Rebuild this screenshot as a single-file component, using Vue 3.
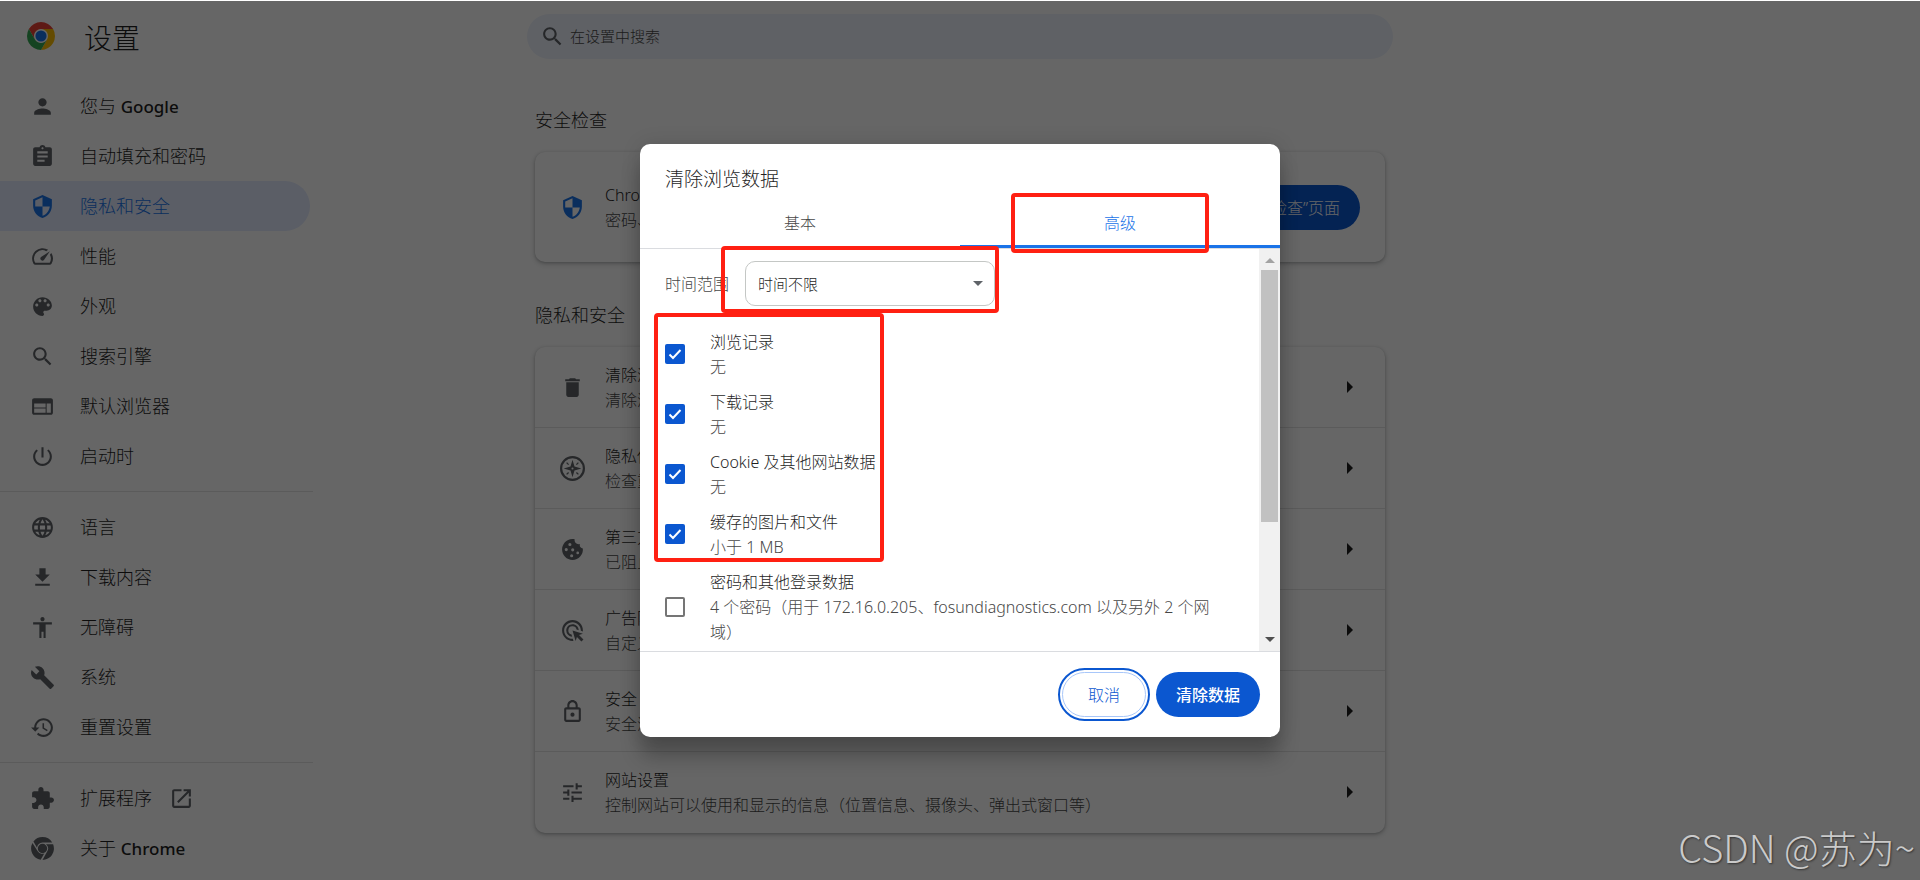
<template>
  <div class="page">
    <header class="toolbar">
      <div class="brand">
        <svg class="logo" viewBox="0 0 48 48" aria-hidden="true">
          <circle cx="24" cy="24" r="12" fill="#fff" />
          <path fill="#ea4335" d="M24 12h20.78A24 24 0 0 0 3.22 12L13.6 30A12 12 0 0 1 24 12z" />
          <path fill="#fbbc04" d="M34.39 30 24 48a24 24 0 0 0 20.78-36H24a12 12 0 0 1 10.39 18z" />
          <path fill="#34a853" d="M13.61 30 3.22 12A24 24 0 0 0 24 48l10.39-18a12 12 0 0 1-20.78 0z" />
          <circle cx="24" cy="24" r="9.5" fill="#1a73e8" />
        </svg>
        <h1>设置</h1>
      </div>
      <label class="search">
        <svg class="icon" viewBox="0 0 24 24" aria-hidden="true"><path :d="icons.search" /></svg>
        <input type="search" placeholder="在设置中搜索" aria-label="在设置中搜索" />
      </label>
    </header>

    <div class="columns">
      <nav class="sidebar">
        <ul v-for="(group, index) in menu" :key="index">
          <li v-for="item in group" :key="item.icon">
            <a href="#" :class="{ selected: item.selected }">
              <svg class="icon" viewBox="0 0 24 24" aria-hidden="true"><path :d="icons[item.icon]" /></svg>
              <span>{{ item.label }} <b v-if="item.brand">{{ item.brand }}</b></span>
              <svg v-if="item.external" class="icon external" viewBox="0 0 24 24" aria-hidden="true">
                <path :d="icons.open" />
              </svg>
            </a>
          </li>
        </ul>
      </nav>

      <main class="content">
        <h2>安全检查</h2>
        <section class="card check">
          <svg class="icon blue" viewBox="0 0 24 24" aria-hidden="true"><path :d="icons.shield" /></svg>
          <div class="text">
            <p>Chrome 可帮助您防范数据泄露、不良扩展程序等</p>
            <p class="sub">密码、扩展程序和其他设置</p>
          </div>
          <button class="filled" type="button">前往“安全检查”页面</button>
        </section>

        <h2>隐私和安全</h2>
        <section class="card">
          <a v-for="row in rows" :key="row.title" class="row" href="#">
            <svg class="icon" viewBox="0 0 24 24" aria-hidden="true">
              <path fill-rule="evenodd" :d="icons[row.icon]" />
            </svg>
            <span class="text">
              <span>{{ row.title }}</span>
              <span class="sub">{{ row.sub }}</span>
            </span>
            <svg class="arrow" viewBox="0 0 6 12" aria-hidden="true"><path d="M0 0l6 6-6 6z" /></svg>
          </a>
        </section>
      </main>
    </div>

    <div class="backdrop">
      <section class="dialog" role="dialog" aria-labelledby="dialog-title">
        <h2 id="dialog-title">清除浏览数据</h2>
        <div class="tabs" role="tablist">
          <button
            v-for="tab in tabs"
            :key="tab"
            type="button"
            role="tab"
            :aria-selected="tab === activeTab"
            :class="{ active: tab === activeTab }"
            @click="activeTab = tab"
          >
            {{ tab }}
          </button>
        </div>

        <div class="body">
          <div class="form">
            <div class="range">
              <label for="time-range">时间范围</label>
              <div class="picker">
                <select id="time-range" v-model="range">
                  <option v-for="option in ranges" :key="option">{{ option }}</option>
                </select>
                <svg viewBox="0 0 10 5" aria-hidden="true"><path d="M0 0h10L5 5z" /></svg>
              </div>
            </div>
            <label v-for="item in items" :key="item.title" class="item">
              <input v-model="item.checked" type="checkbox" />
              <span class="box">
                <svg v-if="item.checked" viewBox="0 0 20 20" aria-hidden="true">
                  <path d="M4.5 10.5L8 14l7.5-8" />
                </svg>
              </span>
              <span class="text">
                <span>{{ item.title }}</span>
                <span class="sub">{{ item.sub }}</span>
              </span>
            </label>
          </div>
          <div class="scrollbar" aria-hidden="true">
            <svg viewBox="0 0 10 5"><path d="M0 5h10L5 0z" fill="#a3a3a3" /></svg>
            <div class="track"><div class="thumb"></div></div>
            <svg viewBox="0 0 10 5"><path d="M0 0h10L5 5z" fill="#505050" /></svg>
          </div>
        </div>

        <footer>
          <button class="outlined" type="button">取消</button>
          <button class="filled" type="button">清除数据</button>
        </footer>

        <div class="mark mark-tab"></div>
        <div class="mark mark-range"></div>
        <div class="mark mark-items"></div>
      </section>
    </div>

    <div class="watermark">CSDN @苏为~</div>
  </div>
</template>

<script setup>
import {ref} from 'vue';

const icons = {
  person: 'M12 12c2.21 0 4-1.79 4-4s-1.79-4-4-4-4 1.79-4 4 1.79 4 4 4zm0 2c-2.67 0-8 1.34-8 4v2h16v-2c0-2.66-5.33-4-8-4z',
  assignment: 'M19 3h-4.18C14.4 1.84 13.3 1 12 1c-1.3 0-2.4.84-2.82 2H5c-1.1 0-2 .9-2 2v14c0 1.1.9 2 2 2h14c1.1 0 2-.9 2-2V5c0-1.1-.9-2-2-2zm-7 0c.55 0 1 .45 1 1s-.45 1-1 1-1-.45-1-1 .45-1 1-1zm2 14H7v-2h7v2zm3-4H7v-2h10v2zm0-4H7V7h10v2z',
  shield: 'M12 1L3 5v6c0 5.55 3.84 10.74 9 12 5.16-1.26 9-6.45 9-12V5l-9-4zm0 10.99h7c-.53 4.12-3.28 7.79-7 8.94V12H5V6.3l7-3.11v8.8z',
  speed: 'M20.38 8.57l-1.23 1.85a8 8 0 0 1-.22 7.58H5.07A8 8 0 0 1 15.58 6.85l1.85-1.23A10 10 0 0 0 3.35 19a2 2 0 0 0 1.72 1h13.85a2 2 0 0 0 1.74-1 10 10 0 0 0-.27-10.44zm-9.79 6.84a2 2 0 0 0 2.83 0l5.66-8.49-8.49 5.66a2 2 0 0 0 0 2.83z',
  palette: 'M12 3c-4.97 0-9 4.03-9 9s4.03 9 9 9c.83 0 1.5-.67 1.5-1.5 0-.39-.15-.74-.39-1.01-.23-.26-.38-.61-.38-.99 0-.83.67-1.5 1.5-1.5H16c2.76 0 5-2.24 5-5 0-4.42-4.03-8-9-8zm-5.5 9c-.83 0-1.5-.67-1.5-1.5S5.67 9 6.5 9 8 9.67 8 10.5 7.33 12 6.5 12zm3-4C8.67 8 8 7.33 8 6.5S8.67 5 9.5 5s1.5.67 1.5 1.5S10.33 8 9.5 8zm5 0c-.83 0-1.5-.67-1.5-1.5S13.67 5 14.5 5s1.5.67 1.5 1.5S15.33 8 14.5 8zm3 4c-.83 0-1.5-.67-1.5-1.5S16.67 9 17.5 9s1.5.67 1.5 1.5-.67 1.5-1.5 1.5z',
  search: 'M15.5 14h-.79l-.28-.27C15.41 12.59 16 11.11 16 9.5 16 5.91 13.09 3 9.5 3S3 5.91 3 9.5 5.91 16 9.5 16c1.61 0 3.09-.59 4.23-1.57l.27.28v.79l5 4.99L20.49 19l-4.99-5zm-6 0C7.01 14 5 11.99 5 9.5S7.01 5 9.5 5 14 7.01 14 9.5 11.99 14 9.5 14z',
  web: 'M20 4H4c-1.1 0-1.99.9-1.99 2L2 18c0 1.1.9 2 2 2h16c1.1 0 2-.9 2-2V6c0-1.1-.9-2-2-2zm-5 14H4v-4h11v4zm0-5H4V9h11v4zm5 5h-4V9h4v9z',
  power: 'M13 3h-2v10h2V3zm4.83 2.17l-1.42 1.42C17.99 7.86 19 9.81 19 12c0 3.87-3.13 7-7 7s-7-3.13-7-7c0-2.19 1.01-4.14 2.58-5.42L6.17 5.17C4.23 6.82 3 9.26 3 12c0 4.97 4.03 9 9 9s9-4.03 9-9c0-2.74-1.23-5.18-3.17-6.83z',
  globe: 'M11.99 2C6.47 2 2 6.48 2 12s4.47 10 9.99 10C17.52 22 22 17.52 22 12S17.52 2 11.99 2zm6.93 6h-2.95c-.32-1.25-.78-2.45-1.38-3.56 1.84.63 3.37 1.91 4.33 3.56zM12 4.04c.83 1.2 1.48 2.53 1.91 3.96h-3.82c.43-1.43 1.08-2.76 1.91-3.96zM4.26 14C4.1 13.36 4 12.69 4 12s.1-1.36.26-2h3.38c-.08.66-.14 1.32-.14 2 0 .68.06 1.34.14 2H4.26zm.82 2h2.95c.32 1.25.78 2.45 1.38 3.56-1.84-.63-3.37-1.9-4.33-3.56zm2.95-8H5.08c.96-1.66 2.49-2.93 4.33-3.56C8.81 5.55 8.35 6.75 8.03 8zM12 19.96c-.83-1.2-1.48-2.53-1.91-3.96h3.82c-.43 1.43-1.08 2.76-1.91 3.96zM14.34 14H9.66c-.09-.66-.16-1.32-.16-2 0-.68.07-1.35.16-2h4.68c.09.65.16 1.32.16 2 0 .68-.07 1.34-.16 2zm.25 5.56c.6-1.11 1.06-2.31 1.38-3.56h2.95c-.96 1.65-2.49 2.93-4.33 3.56zM16.36 14c.08-.66.14-1.32.14-2 0-.68-.06-1.34-.14-2h3.38c.16.64.26 1.31.26 2s-.1 1.36-.26 2h-3.38z',
  download: 'M19 9h-4V3H9v6H5l7 7 7-7zM5 18v2h14v-2H5z',
  accessibility: 'M12 2c1.1 0 2 .9 2 2s-.9 2-2 2-2-.9-2-2 .9-2 2-2zm9 7h-6v13h-2v-6h-2v6H9V9H3V7h18v2z',
  wrench: 'M22.7 19l-9.1-9.1c.9-2.3.4-5-1.5-6.9-2-2-5-2.4-7.4-1.3L9 6 6 9 1.6 4.7C.4 7.1.9 10.1 2.9 12.1c1.9 1.9 4.6 2.4 6.9 1.5l9.1 9.1c.4.4 1 .4 1.4 0l2.3-2.3c.5-.4.5-1.1.1-1.4z',
  history: 'M13 3c-4.97 0-9 4.03-9 9H1l3.89 3.89.07.14L9 12H6c0-3.87 3.13-7 7-7s7 3.13 7 7-3.13 7-7 7c-1.93 0-3.68-.79-4.94-2.06l-1.42 1.42C8.27 19.99 10.51 21 13 21c4.97 0 9-4.03 9-9s-4.03-9-9-9zm-1 5v5l4.28 2.54.72-1.21-3.5-2.08V8H12z',
  extension: 'M20.5 11H19V7c0-1.1-.9-2-2-2h-4V3.5C13 2.12 11.88 1 10.5 1S8 2.12 8 3.5V5H4c-1.1 0-1.99.9-1.99 2v3.8H3.5c1.49 0 2.7 1.21 2.7 2.7s-1.21 2.7-2.7 2.7H2V20c0 1.1.9 2 2 2h3.8v-1.5c0-1.49 1.21-2.7 2.7-2.7 1.49 0 2.7 1.21 2.7 2.7V22H17c1.1 0 2-.9 2-2v-4h1.5c1.38 0 2.5-1.12 2.5-2.5S21.88 11 20.5 11z',
  open: 'M19 19H5V5h7V3H5c-1.11 0-2 .9-2 2v14c0 1.1.89 2 2 2h14c1.1 0 2-.9 2-2v-7h-2v7zM14 3v2h3.59l-9.83 9.83 1.41 1.41L19 6.41V10h2V3h-7z',
  chrome: 'M12 7.5a4.5 4.5 0 1 0 0 9 4.5 4.5 0 0 0 0-9zM12 1a11 11 0 0 0-8.7 4.27l3.46 5.98A5.3 5.3 0 0 1 12 6.2h9.35A11 11 0 0 0 12 1zM22.2 7.9h-6.85a5.3 5.3 0 0 1 1.25 6.75L12 23a11 11 0 0 0 10.2-15.1zM2.35 6.8A11 11 0 0 0 10.25 22.85l3.45-5.95a5.3 5.3 0 0 1-6.3-2.25z',
  trash: 'M6 19c0 1.1.9 2 2 2h8c1.1 0 2-.9 2-2V7H6v12zM19 4h-3.5l-1-1h-5l-1 1H5v2h14V4z',
  compass: 'M12 0a12 12 0 1 0 0 24 12 12 0 0 0 0-24zM12 2.1a9.9 9.9 0 1 1 0 19.8 9.9 9.9 0 0 1 0-19.8zM12 3.5l1.9 6.6 6.6 1.9-6.6 1.9-1.9 6.6-1.9-6.6L3.5 12l6.6-1.9zM12 11a1 1 0 1 0 0 2 1 1 0 0 0 0-2zM6.8 5.9l1.9 1.9-.9.9-1.9-1.9zM17.2 5.9l.9.9-1.9 1.9-.9-.9zM5.9 17.2l1.9-1.9.9.9-1.9 1.9zM15.3 16.2l.9-.9 1.9 1.9-.9.9z',
  cookie: 'M21.95 10.99c-1.79-.03-3.7-1.95-2.68-4.22-2.98 1-5.77-1.59-5.19-4.56C6.95.71 2 6.58 2 12c0 5.52 4.48 10 10 10 5.89 0 10.54-5.08 9.95-11.01zM9.5 5.7a1.5 1.5 0 1 1 0 3 1.5 1.5 0 0 1 0-3zM6 10.6a1.5 1.5 0 1 1 0 3 1.5 1.5 0 0 1 0-3zM12.2 10.8a1.5 1.5 0 1 1 0 3 1.5 1.5 0 0 1 0-3zM17 14a1.3 1.3 0 1 1 0 2.6A1.3 1.3 0 0 1 17 14zM11.2 16.5a1.5 1.5 0 1 1 0 3 1.5 1.5 0 0 1 0-3z',
  ads: 'M11.71 17.99A5.993 5.993 0 0 1 6 12c0-3.31 2.69-6 6-6 3.22 0 5.84 2.53 5.99 5.71l-2.1-.63a3.999 3.999 0 1 0-4.81 4.81l.63 2.1zM22 12c0 .3-.01.6-.04.9l-1.97-.59c.01-.1.01-.21.01-.31 0-4.42-3.58-8-8-8s-8 3.58-8 8 3.58 8 8 8c.1 0 .21 0 .31-.01l.59 1.97c-.3.03-.6.04-.9.04-5.52 0-10-4.48-10-10S6.48 2 12 2s10 4.48 10 10zm-3.77 4.26L22 15l-10-3 3 10 1.26-3.77 4.27 4.27 1.98-1.98-4.28-4.26z',
  lock: 'M18 8h-1V6c0-2.76-2.24-5-5-5S7 3.24 7 6v2H6c-1.1 0-2 .9-2 2v10c0 1.1.9 2 2 2h12c1.1 0 2-.9 2-2V10c0-1.1-.9-2-2-2zM9 6c0-1.66 1.34-3 3-3s3 1.34 3 3v2H9V6zm9 14H6V10h12v10zM12 13a2 2 0 1 1 0 4 2 2 0 0 1 0-4z',
  tune: 'M3 17v2h6v-2H3zM3 5v2h10V5H3zm10 16v-2h8v-2h-8v-2h-2v6h2zM7 9v2H3v2h4v2h2V9H7zm14 4v-2H11v2h10zm-6-4h2V7h4V5h-4V3h-2v6z'
};

const menu = [
  [
    {icon: 'person', label: '您与', brand: 'Google'},
    {icon: 'assignment', label: '自动填充和密码'},
    {icon: 'shield', label: '隐私和安全', selected: true},
    {icon: 'speed', label: '性能'},
    {icon: 'palette', label: '外观'},
    {icon: 'search', label: '搜索引擎'},
    {icon: 'web', label: '默认浏览器'},
    {icon: 'power', label: '启动时'}
  ],
  [
    {icon: 'globe', label: '语言'},
    {icon: 'download', label: '下载内容'},
    {icon: 'accessibility', label: '无障碍'},
    {icon: 'wrench', label: '系统'},
    {icon: 'history', label: '重置设置'}
  ],
  [
    {icon: 'extension', label: '扩展程序', external: true},
    {icon: 'chrome', label: '关于', brand: 'Chrome'}
  ]
];

const rows = [
  {icon: 'trash', title: '清除浏览数据', sub: '清除浏览记录、Cookie、缓存及其他数据'},
  {icon: 'compass', title: '隐私保护指南', sub: '检查重要的隐私和安全控制设置'},
  {icon: 'cookie', title: '第三方 Cookie', sub: '已阻止无痕模式下的第三方 Cookie'},
  {icon: 'ads', title: '广告隐私权设置', sub: '自定义网站在向您展示广告时可使用的信息'},
  {icon: 'lock', title: '安全', sub: '安全浏览（保护您免受危险网站的侵害）和其他安全设置'},
  {icon: 'tune', title: '网站设置', sub: '控制网站可以使用和显示的信息（位置信息、摄像头、弹出式窗口等）'}
];

const tabs = ['基本', '高级'];
const activeTab = ref('高级');

const ranges = ['过去一小时', '过去 24 小时', '过去 7 天', '过去 4 周', '时间不限'];
const range = ref('时间不限');

const items = ref([
  {title: '浏览记录', sub: '无', checked: true},
  {title: '下载记录', sub: '无', checked: true},
  {title: 'Cookie 及其他网站数据', sub: '无', checked: true},
  {title: '缓存的图片和文件', sub: '小于 1 MB', checked: true},
  {
    title: '密码和其他登录数据',
    sub: '4 个密码（用于 172.16.0.205、fosundiagnostics.com 以及另外 2 个网域）',
    checked: false
  }
]);
</script>

<style>
body {
  margin: 0;
  background: #fff;
}
</style>

<style scoped>
.page {
  position: relative;
  box-sizing: border-box;
  min-height: 100vh;
  padding-top: 1px;
  overflow: hidden;
  background: #fff;
  color: #1f1f1f;
  font-family: 'Noto Sans', 'Noto Sans CJK SC', sans-serif;
  font-size: 16px;
  font-weight: 300;
  line-height: 25px;
}

h1,
h2,
p,
ul {
  margin: 0;
  padding: 0;
  font-weight: inherit;
}

ul {
  list-style: none;
}

a {
  color: inherit;
  text-decoration: none;
}

button,
input,
select {
  font: inherit;
}

.icon {
  flex: none;
  width: 25px;
  height: 25px;
  fill: #5f6368;
}

.toolbar,
.columns {
  display: grid;
  grid-template-columns: 313px 1fr 313px;
}

.toolbar {
  align-items: center;
  height: 70px;
}

.brand {
  display: flex;
  align-items: center;
  gap: 29px;
  padding-left: 27px;
}

.logo {
  width: 28px;
  height: 28px;
}

h1 {
  padding-top: 4px;
  font-size: 28px;
  line-height: 36px;
}

.search {
  display: flex;
  align-items: center;
  justify-self: center;
  gap: 5px;
  box-sizing: border-box;
  width: 100%;
  max-width: 866px;
  height: 45px;
  padding: 0 13px;
  border-radius: 23px;
  background: #edf2fc;
}

.search input {
  flex: 1;
  padding: 0;
  border: 0;
  outline: 0;
  background: none;
  font-size: 15px;
}

.search input::placeholder {
  color: #474747;
  opacity: 1;
}

.sidebar {
  padding-top: 10px;
}

.sidebar ul + ul {
  margin-top: 10px;
  padding-top: 10px;
  border-top: 1px solid #e3e3e3;
}

.sidebar a {
  display: flex;
  align-items: center;
  gap: 25px;
  height: 50px;
  margin-right: 3px;
  padding-left: 30px;
  border-radius: 0 25px 25px 0;
  font-size: 18px;
}

.sidebar a.selected {
  background: #e3ebfe;
  color: #1a73e8;
}

.sidebar b {
  font-size: 17px;
  font-weight: 500;
}

.external {
  margin-left: -8px;
}

.selected .icon,
.icon.blue {
  fill: #1a73e8;
}

.content {
  justify-self: center;
  width: 100%;
  max-width: 850px;
  padding-top: 35px;
}

.content h2 {
  padding-bottom: 17px;
  font-size: 18px;
  line-height: 29px;
}

.card {
  border-radius: 10px;
  background: #fff;
  box-shadow: 0 1px 3px rgba(60, 64, 67, 0.3), 0 2px 5px 1px rgba(60, 64, 67, 0.15);
}

.card + h2 {
  padding-top: 39px;
}

.text {
  display: flex;
  flex-direction: column;
  padding-top: 2px;
}

.card .text {
  flex: 1;
}

.sub {
  color: #474747;
}

.check {
  display: flex;
  align-items: center;
  gap: 20px;
  height: 110px;
  padding: 0 25px;
}

.row {
  display: flex;
  align-items: center;
  gap: 20px;
  height: 80px;
  padding: 0 32px 0 25px;
  border-bottom: 1px solid #e3e3e3;
}

.row:last-child {
  border-bottom-color: transparent;
}

.arrow {
  width: 6px;
  height: 12px;
  fill: #1f1f1f;
}

.filled,
.outlined {
  height: 45px;
  padding: 2px 20px 0;
  border: 0;
  border-radius: 23px;
  background: #0b57d0;
  color: #fff;
}

.backdrop {
  position: absolute;
  inset: 1px 0 0;
  display: flex;
  align-items: center;
  justify-content: center;
  background: rgba(0, 0, 0, 0.6);
}

.dialog {
  position: relative;
  width: 640px;
  border-radius: 10px;
  background: #fff;
  box-shadow: 0 0 20px rgba(0, 0, 0, 0.12), 0 20px 20px rgba(0, 0, 0, 0.24);
}

.dialog h2 {
  padding: 21px 25px 4px;
  font-size: 19px;
  line-height: 29px;
}

.tabs {
  display: flex;
  border-bottom: 1px solid #dadce0;
}

.tabs button {
  flex: 1;
  height: 50px;
  padding: 3px 0 0;
  border: 0;
  border-bottom: 3px solid transparent;
  background: none;
  color: #474747;
}

.tabs button.active {
  border-bottom-color: #1a73e8;
  color: #1a73e8;
}

.body {
  display: flex;
  border-bottom: 1px solid #dadce0;
}

.form {
  flex: 1;
  padding: 12px 40px 2px 25px;
}

.range {
  display: flex;
  align-items: center;
  gap: 16px;
  margin-bottom: 18px;
  color: #474747;
}

.range label {
  padding-top: 2px;
}

.picker {
  display: flex;
  align-items: center;
  width: 250px;
}

.picker select {
  flex: 1;
  box-sizing: border-box;
  height: 45px;
  padding: 2px 12px 0;
  border: 1px solid #c4c7c5;
  border-radius: 10px;
  appearance: none;
  background: #fff;
  color: #1f1f1f;
  font-size: 15px;
}

.picker svg {
  width: 10px;
  height: 5px;
  margin-right: 12px;
  margin-left: -22px;
  fill: #5f6368;
  pointer-events: none;
}

.item {
  display: flex;
  align-items: center;
  gap: 25px;
  padding: 4px 0;
}

.item input {
  position: absolute;
  opacity: 0;
}

.box {
  flex: none;
  box-sizing: border-box;
  width: 20px;
  height: 20px;
  border: 2px solid #757575;
  border-radius: 2px;
}

.item input:checked + .box {
  border: 0;
  background: #0b57d0;
}

.box svg {
  display: block;
  fill: none;
  stroke: #fff;
  stroke-width: 2;
}

.scrollbar {
  display: flex;
  flex-direction: column;
  align-items: center;
  box-sizing: border-box;
  width: 21px;
  padding: 9px 0;
  background: #f1f1f1;
}

.scrollbar svg {
  width: 10px;
  height: 5px;
}

.track {
  flex: 1;
  width: 17px;
  padding: 7px 0;
}

.thumb {
  height: 70%;
  background: #c1c1c1;
}

footer {
  display: flex;
  justify-content: flex-end;
  gap: 10px;
  padding: 20px;
}

.outlined {
  width: 84px;
  border: 1px solid #a8c7fa;
  background: #fff;
  color: #0b57d0;
  outline: 2px solid #0b57d0;
  outline-offset: 2px;
}

.dialog .filled {
  font-weight: 500;
}

/* red frames drawn over the dialog */
.mark {
  position: absolute;
  box-sizing: border-box;
  border: 4px solid #ff2012;
  border-radius: 4px;
  pointer-events: none;
}

.mark-tab {
  top: 49px;
  left: 371px;
  width: 198px;
  height: 60px;
}

.mark-range {
  top: 102px;
  left: 81px;
  width: 278px;
  height: 67px;
}

.mark-items {
  top: 169px;
  left: 14px;
  width: 230px;
  height: 249px;
}

.watermark {
  position: absolute;
  right: 5px;
  bottom: 10px;
  color: #cacaca;
  font-family: 'Noto Sans CJK SC', sans-serif;
  font-size: 38px;
  line-height: 46px;
  text-shadow: 1px 1px 2px rgba(0, 0, 0, 0.5);
}
</style>
